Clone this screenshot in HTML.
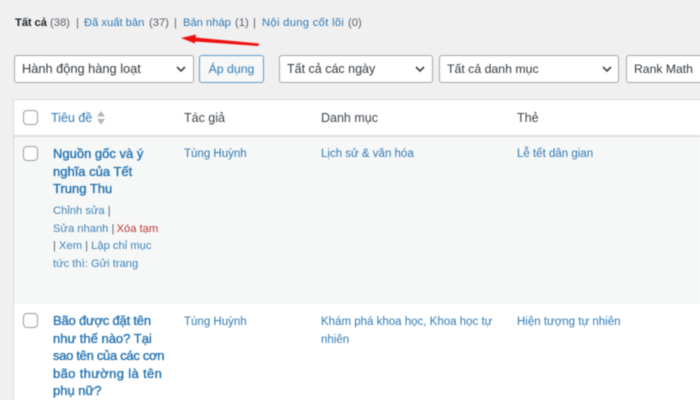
<!DOCTYPE html>
<html lang="vi">
<head>
<meta charset="utf-8">
<style>
html,body{margin:0;padding:0;width:700px;height:400px;overflow:hidden;background:#f0f0f1}
body{font-family:"Liberation Sans",sans-serif;font-size:11.5px;color:#3c434a;position:relative}
#p{position:absolute;inset:0;filter:blur(.4px)}
.t{position:absolute;white-space:nowrap;line-height:17px}
.l{color:#2f7ab5}
.g{color:#5a6168}
.s{position:absolute;top:15px;white-space:nowrap;line-height:17px;font-size:11.2px}
.box{position:absolute;box-sizing:border-box;height:28px;top:55px;background:#fff;border:1px solid #a5a7aa;border-radius:3px;font-size:12.5px;line-height:26px;padding-left:7px;color:#33393e;white-space:nowrap;overflow:hidden}
.cb{position:absolute;box-sizing:border-box;left:23px;width:15px;height:15px;background:#fff;border:1px solid #9a9da1;border-radius:4px}
.ch{position:absolute;top:65px}
.h{font-size:12.5px;top:110px}
.tt{font-size:13px;color:#2271b1;line-height:17.5px;-webkit-text-stroke:.35px #2271b1}
</style>
</head>
<body>
<div id="p">
<div class="s" style="left:15px;font-weight:700;color:#1d2327;letter-spacing:-.1px">Tất cả</div>
<div class="s g" style="left:50px">(38)</div>
<div class="s g" style="left:76px">|</div>
<div class="s l" style="left:84px">Đã xuất bản</div>
<div class="s g" style="left:149px">(37)</div>
<div class="s g" style="left:174px">|</div>
<div class="s l" style="left:183px">Bản nháp</div>
<div class="s g" style="left:235px">(1)</div>
<div class="s g" style="left:253px">|</div>
<div class="s l" style="left:262px;letter-spacing:.32px">Nội dung cốt lõi</div>
<div class="s g" style="left:348px">(0)</div>

<svg style="position:absolute;left:175px;top:30px" width="90" height="20" viewBox="0 0 90 20"><path d="M6 8 L21 4.5 L20.5 7.5 L84 13.5 L83.5 16 L20 11.5 L20 13.5 Z" fill="#ee1111"/></svg>

<div class="box" style="left:14px;width:180px;font-size:12.8px">Hành động hàng loạt</div>
<svg class="ch" style="left:175px" width="12" height="8" viewBox="0 0 12 8"><path d="M2 2 L6 6 L10 2" fill="none" stroke="#3c434a" stroke-width="1.6"/></svg>
<div class="box" style="left:199px;width:65px;background:#f6f7f7;border-color:#5f9cc9;color:#2f7ab5;text-align:center;padding-left:0;font-size:12.3px">Áp dụng</div>
<div class="box" style="left:279px;width:154px">Tất cả các ngày</div>
<svg class="ch" style="left:414px" width="12" height="8" viewBox="0 0 12 8"><path d="M2 2 L6 6 L10 2" fill="none" stroke="#3c434a" stroke-width="1.6"/></svg>
<div class="box" style="left:439px;width:180px;font-size:12.3px">Tất cả danh mục</div>
<svg class="ch" style="left:601px" width="12" height="8" viewBox="0 0 12 8"><path d="M2 2 L6 6 L10 2" fill="none" stroke="#3c434a" stroke-width="1.6"/></svg>
<div class="box" style="left:626px;width:90px;font-size:12.2px">Rank Math</div>

<div style="position:absolute;left:13px;top:99px;width:700px;height:320px;background:#fff;border:1px solid #dcdcde;box-sizing:border-box"></div>
<div style="position:absolute;left:14px;top:135px;width:686px;height:2px;background:#dfdfe0"></div>
<div style="position:absolute;left:14px;top:137px;width:686px;height:167px;background:#f6f7f7"></div>

<div class="cb" style="top:110px"></div>
<div class="t l h" style="left:51px">Tiêu đề</div>
<svg style="position:absolute;left:96px;top:110px" width="10" height="16" viewBox="0 0 10 16"><path d="M5 1 L9 6.5 H1 Z M1 9 H9 L5 14.5 Z" fill="#b4b6b9"/></svg>
<div class="t h" style="left:184px">Tác giả</div>
<div class="t h" style="left:321px">Danh mục</div>
<div class="t h" style="left:517px">Thẻ</div>

<div class="cb" style="top:146px"></div>
<div class="t tt" style="left:53px;top:145px">Nguồn gốc và ý<br>nghĩa của Tết<br>Trung Thu</div>
<div class="t" style="left:53px;top:203px;line-height:17.5px;font-size:11.2px;color:#3d82b8">Chỉnh sửa <span class="g">|</span><br>Sửa nhanh <span class="g">|</span> <span style="color:#bb3a3b;margin-left:-1px">Xóa tạm</span><br><span class="g">|</span> Xem <span class="g">|</span> Lập chỉ mục<br>tức thì: Gửi trang</div>
<div class="t l" style="left:184px;top:146px">Tùng Huỳnh</div>
<div class="t l" style="left:321px;top:146px">Lịch sử &amp; văn hóa</div>
<div class="t l" style="left:517px;top:146px">Lễ tết dân gian</div>

<div class="cb" style="top:313px"></div>
<div class="t tt" style="left:53px;top:312px"><span style="letter-spacing:-.2px">Bão được đặt tên</span><br>như thế nào? Tại<br><span style="letter-spacing:-.3px">sao tên của các cơn</span><br><span style="letter-spacing:.35px">bão thường là tên</span><br>phụ nữ?</div>
<div class="t l" style="left:184px;top:314px">Tùng Huỳnh</div>
<div class="t l" style="left:321px;top:314px;line-height:17.5px">Khám phá khoa học, Khoa học tự<br>nhiên</div>
<div class="t l" style="left:517px;top:314px">Hiện tượng tự nhiên</div>
</div>
</body>
</html>
